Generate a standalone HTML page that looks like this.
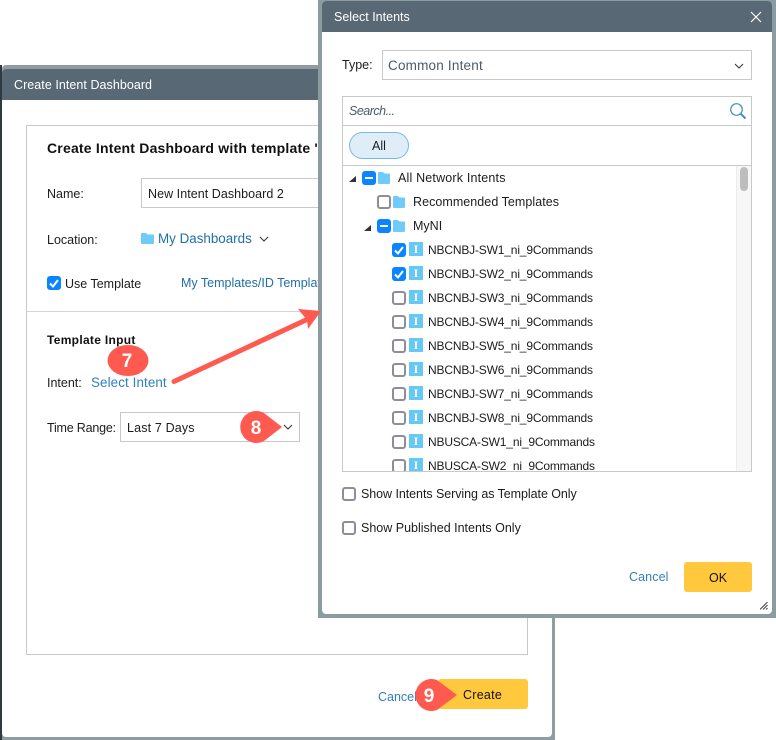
<!DOCTYPE html>
<html><head><meta charset="utf-8">
<style>
html,body{margin:0;padding:0;background:#fff}
#p{position:relative;width:776px;height:740px;overflow:hidden;background:#fff;font-family:"Liberation Sans",sans-serif;font-size:12.5px;color:#1c1c1c}
.a,.t{position:absolute;box-sizing:border-box}
.t{white-space:nowrap;line-height:16px;height:16px;margin-top:1px}
.n{margin-top:0}
.r{font-size:12px;letter-spacing:-.17px}
.lk{color:#1f6fa8}
.cb{position:absolute;box-sizing:border-box;width:14px;height:14px;border:2px solid #8d8d9c;border-radius:3px;background:#fff}
.cb.on{background:#0a84ff;border-color:#0a84ff}
.cb svg{position:absolute;left:-2px;top:-2px}
.ic{position:absolute;width:14px;height:14px;margin-top:-1px;background:#66c8f5;color:#fff;font:bold 12px/15px "Liberation Serif",serif;text-align:center}
</style></head><body><div id="p">

<!-- left dialog -->
<div class="a" style="left:0;top:65px;width:2px;height:675px;background:#2f3a40"></div>
<div class="a" style="left:2px;top:65px;width:553px;height:675px;background:#8f9da1;border-radius:4px 0 0 0"></div>
<div class="a" style="left:2px;top:69px;width:550px;height:668px;background:#fff;border-radius:4px"></div>
<div class="a" style="left:2px;top:69px;width:550px;height:31px;background:#586874;border-radius:4px 4px 0 0"></div>
<div class="t n" style="left:14px;top:77px;color:#fff;letter-spacing:.05px">Create Intent Dashboard</div>
<div class="a" style="left:26px;top:125px;width:502px;height:530px;border:1px solid #c9c9c9"></div>
<div class="t n" style="left:47px;top:140px;font-weight:bold;font-size:14px;color:#111;letter-spacing:.2px">Create Intent Dashboard with template '</div>
<div class="t" style="left:47px;top:185px">Name:</div>
<div class="a" style="left:141px;top:178px;width:200px;height:30px;border:1px solid #c9c9c9"></div>
<div class="t" style="left:148px;top:185px;letter-spacing:.05px">New Intent Dashboard 2</div>
<div class="t" style="left:47px;top:231px">Location:</div>
<svg class="a" style="left:141px;top:232px" width="13" height="13"><path d="M0 2a1 1 0 0 1 1-1h4l1.500 1.500H12a1 1 0 0 1 1 1V11a1 1 0 0 1-1 1H1a1 1 0 0 1-1-1z" fill="#6fcbf8"/></svg>
<div class="t lk" style="left:158px;top:230px;font-size:13.4px">My Dashboards</div>
<svg class="a" style="left:259px;top:236px" width="10" height="7"><path d="M1 1l4 4 4-4" fill="none" stroke="#333" stroke-width="1"/></svg>
<div class="cb on" style="left:47px;top:276px"><svg width="14" height="14"><path d="M3 7.500l3 3 5-6.500" fill="none" stroke="#fff" stroke-width="2"/></svg></div>
<div class="t" style="left:65px;top:275px">Use Template</div>
<div class="t n lk" style="left:181px;top:275px">My Templates/ID Templates</div>
<div class="a" style="left:27px;top:311px;width:500px;height:1px;background:#d4d4d4"></div>
<div class="t n" style="left:47px;top:332px;font-weight:bold;font-size:12px;color:#111;letter-spacing:.3px">Template Input</div>
<div class="t" style="left:47px;top:374px">Intent:</div>
<div class="t" style="left:91px;top:374px;color:#2f7fc1;font-size:13.4px;letter-spacing:.1px">Select Intent</div>
<div class="t" style="left:47px;top:419px;letter-spacing:-.2px">Time Range:</div>
<div class="a" style="left:120px;top:412px;width:180px;height:30px;border:1px solid #c9c9c9"></div>
<div class="t" style="left:127px;top:419px;letter-spacing:.15px">Last 7 Days</div>
<svg class="a" style="left:283px;top:424px" width="10" height="7"><path d="M1 1l4 4 4-4" fill="none" stroke="#333" stroke-width="1"/></svg>
<div class="t" style="left:378px;top:688px;color:#2f7fc1">Cancel</div>
<div class="a" style="left:438px;top:679px;width:90px;height:30px;background:#ffc83d;border-radius:3px"></div>
<div class="t" style="left:463px;top:686px;color:#111;letter-spacing:.25px">Create</div>

<!-- right dialog -->
<div class="a" style="left:318px;top:0;width:458px;height:618px;background:#8b9ca1"></div>
<div class="a" style="left:322px;top:1px;width:450px;height:613px;background:#fff;border-radius:4px"></div>
<div class="a" style="left:322px;top:1px;width:450px;height:31px;background:#586874;border-radius:4px 4px 0 0"></div>
<div class="t n" style="left:334px;top:9px;color:#fff">Select Intents</div>
<svg class="a" style="left:750px;top:11px" width="12" height="12"><path d="M1 1l10 10M11 1L1 11" stroke="#fff" stroke-width="1.200"/></svg>
<div class="t n" style="left:342px;top:57px">Type:</div>
<div class="a" style="left:382px;top:50px;width:370px;height:30px;border:1px solid #c9c9c9"></div>
<div class="t" style="left:388px;top:57px;font-size:13.500px;color:#4b5b68;letter-spacing:.2px">Common Intent</div>
<svg class="a" style="left:734px;top:63px" width="10" height="7"><path d="M1 1l4 4 4-4" fill="none" stroke="#333" stroke-width="1"/></svg>
<div class="a" style="left:342px;top:96px;width:410px;height:376px;border:1px solid #c9c9c9"></div>
<div class="a" style="left:343px;top:125px;width:408px;height:1px;background:#c9c9c9"></div>
<div class="a" style="left:343px;top:165px;width:408px;height:1px;background:#c9c9c9"></div>
<div class="t n" style="left:349px;top:103px;font-style:italic;color:#4b5b68;letter-spacing:-.5px">Search...</div>
<svg class="a" style="left:729px;top:102px" width="18" height="18"><circle cx="7.500" cy="7.500" r="5.800" fill="none" stroke="#3c8fcb" stroke-width="1.200"/><path d="M11.800 11.800l4.700 4.700" stroke="#3c8fcb" stroke-width="2"/></svg>
<div class="a" style="left:349px;top:132px;width:60px;height:27px;background:#deedf8;border:1px solid #74bbdf;border-radius:14px"></div>
<div class="t n" style="left:372px;top:138px">All</div>
<div class="a" style="left:736px;top:166px;width:15px;height:305px;background:#f7f7f7;border-left:1px solid #ececec"></div>
<div class="a" style="left:740px;top:167px;width:8px;height:24px;background:#bdbdbd;border-radius:4px"></div>

<svg class="a" style="left:342px;top:166px" width="394" height="305">
<path d="M7 16l7-6v6zM22 65l7-6v6z" fill="#333"/>
<g fill="#6fcbf8">
<path d="M36 7a1 1 0 0 1 1-1h4l1.500 1.500H47a1 1 0 0 1 1 1V17a1 1 0 0 1-1 1H37a1 1 0 0 1-1-1z"/>
<path d="M51 31a1 1 0 0 1 1-1h4l1.500 1.500H62a1 1 0 0 1 1 1V41a1 1 0 0 1-1 1H52a1 1 0 0 1-1-1z"/>
<path d="M51 55a1 1 0 0 1 1-1h4l1.500 1.500H62a1 1 0 0 1 1 1V65a1 1 0 0 1-1 1H52a1 1 0 0 1-1-1z"/>
</g></svg>
<div class="cb on" style="left:362px;top:171px"><svg width="14" height="14"><path d="M3 7h8" stroke="#fff" stroke-width="2"/></svg></div>
<div class="t" style="left:398px;top:169px;letter-spacing:.18px">All Network Intents</div>
<div class="cb" style="left:377px;top:195px"></div>
<div class="t" style="left:413px;top:193px;letter-spacing:.05px">Recommended Templates</div>
<div class="cb on" style="left:377px;top:219px"><svg width="14" height="14"><path d="M3 7h8" stroke="#fff" stroke-width="2"/></svg></div>
<div class="t" style="left:413px;top:217px">MyNI</div>

<div class="cb on" style="left:392px;top:243px"><svg width="14" height="14"><path d="M3 7.500l3 3 5-6.500" fill="none" stroke="#fff" stroke-width="2"/></svg></div><div class="ic" style="left:409px;top:243px">I</div><div class="t r" style="left:428px;top:241px">NBCNBJ-SW1_ni_9Commands</div>
<div class="cb on" style="left:392px;top:267px"><svg width="14" height="14"><path d="M3 7.500l3 3 5-6.500" fill="none" stroke="#fff" stroke-width="2"/></svg></div><div class="ic" style="left:409px;top:267px">I</div><div class="t r" style="left:428px;top:265px">NBCNBJ-SW2_ni_9Commands</div>
<div class="cb" style="left:392px;top:291px"></div><div class="ic" style="left:409px;top:291px">I</div><div class="t r" style="left:428px;top:289px">NBCNBJ-SW3_ni_9Commands</div>
<div class="cb" style="left:392px;top:315px"></div><div class="ic" style="left:409px;top:315px">I</div><div class="t r" style="left:428px;top:313px">NBCNBJ-SW4_ni_9Commands</div>
<div class="cb" style="left:392px;top:339px"></div><div class="ic" style="left:409px;top:339px">I</div><div class="t r" style="left:428px;top:337px">NBCNBJ-SW5_ni_9Commands</div>
<div class="cb" style="left:392px;top:363px"></div><div class="ic" style="left:409px;top:363px">I</div><div class="t r" style="left:428px;top:361px">NBCNBJ-SW6_ni_9Commands</div>
<div class="cb" style="left:392px;top:387px"></div><div class="ic" style="left:409px;top:387px">I</div><div class="t r" style="left:428px;top:385px">NBCNBJ-SW7_ni_9Commands</div>
<div class="cb" style="left:392px;top:411px"></div><div class="ic" style="left:409px;top:411px">I</div><div class="t r" style="left:428px;top:409px">NBCNBJ-SW8_ni_9Commands</div>
<div class="cb" style="left:392px;top:435px"></div><div class="ic" style="left:409px;top:435px">I</div><div class="t r" style="left:428px;top:433px">NBUSCA-SW1_ni_9Commands</div>
<div class="a" style="left:343px;top:455px;width:393px;height:16px;overflow:hidden"><div class="cb" style="left:49px;top:4px"></div><div class="ic" style="left:66px;top:4px">I</div><div class="t r" style="left:85px;top:2px">NBUSCA-SW2_ni_9Commands</div></div>

<div class="cb" style="left:342px;top:487px"></div>
<div class="t" style="left:361px;top:485px;letter-spacing:-.06px">Show Intents Serving as Template Only</div>
<div class="cb" style="left:342px;top:521px"></div>
<div class="t" style="left:361px;top:519px">Show Published Intents Only</div>
<div class="t n" style="left:629px;top:569px;color:#2f7fc1;letter-spacing:.1px">Cancel</div>
<div class="a" style="left:684px;top:562px;width:68px;height:30px;background:#ffc83d;border-radius:3px"></div>
<div class="t" style="left:709px;top:569px;color:#111">OK</div>
<svg class="a" style="left:760px;top:602px" width="8" height="8"><path d="M0 7.500L7.500 0M3 7.500L7.500 3M6 7.500L7.500 6" stroke="#444" stroke-width="1"/></svg>

<!-- annotations -->
<svg class="a" style="left:0;top:0" width="776" height="740">
<path d="M174 381.500L308 319" stroke="#ff5a4f" stroke-width="5" stroke-linecap="round"/>
<path d="M298 309L321 311 308 329 307 320z" fill="#ff5a4f"/>
<ellipse cx="128" cy="360.500" rx="20.500" ry="15.500" fill="#ff5a4f"/>
<path d="M282 427L264 413A16 16 0 1 0 264 441z" fill="#ff5a4f"/>
<path d="M457 695L437 680A16 16 0 1 0 437 710z" fill="#ff5a4f"/>
<g fill="#fff" font-family="Liberation Sans,sans-serif" font-weight="bold" font-size="19" text-anchor="middle">
<text x="127" y="367">7</text>
<text x="256" y="434">8</text>
<text x="429" y="702">9</text>
</g></svg>
</div></body></html>
